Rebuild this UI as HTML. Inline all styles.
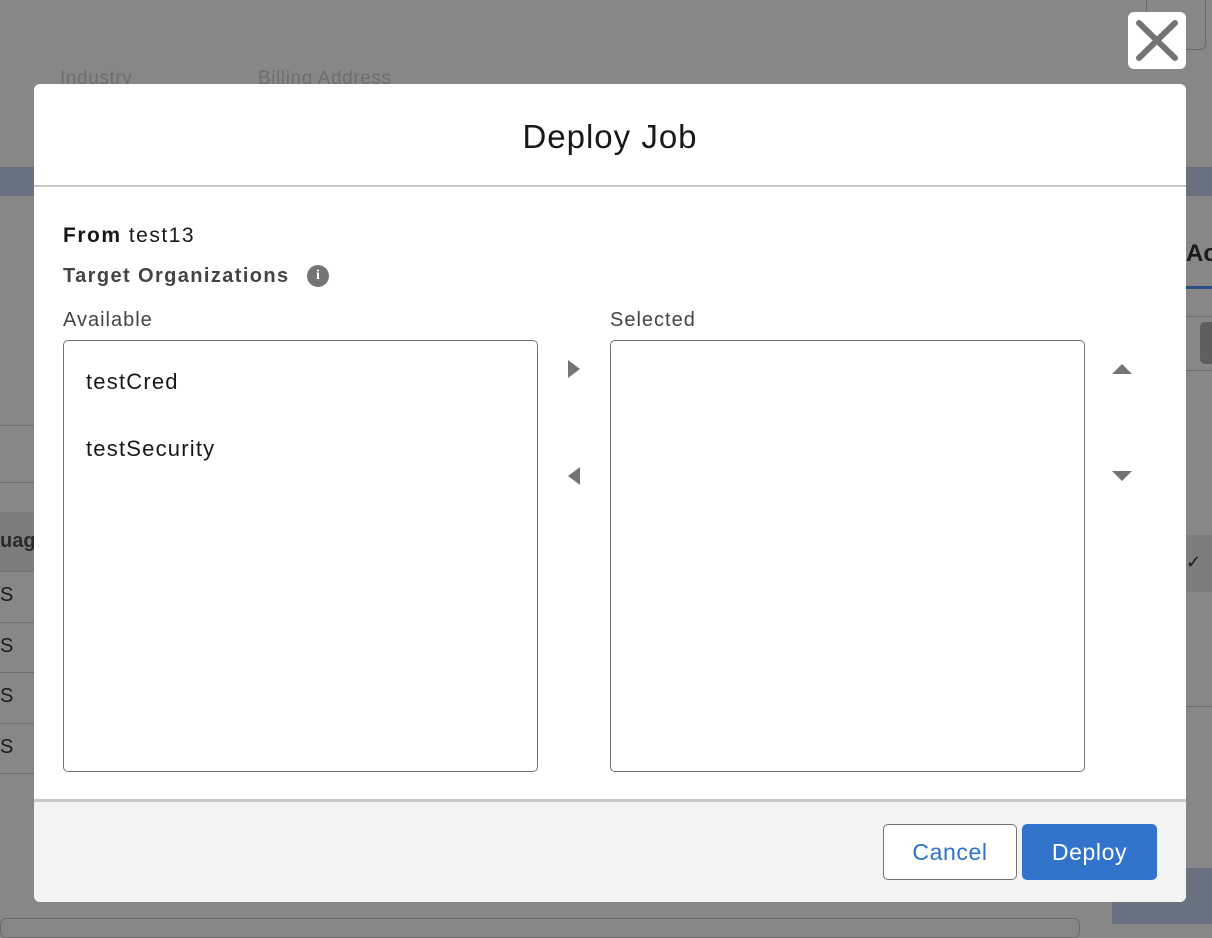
<!DOCTYPE html>
<html><head><meta charset="utf-8"><style>
*{box-sizing:border-box;margin:0;padding:0}
body{width:1212px;height:924px;background:#878787;position:relative;overflow:hidden;font-family:"Liberation Sans",Arial,sans-serif;color:#181818}
.abs{position:absolute}
</style></head><body>
<div class="abs" style="left:1146px;top:0;width:60px;height:50px;border:1px solid #6a6a6a;border-top:none;border-radius:0 0 6px 6px"></div>
<div class="abs" style="left:60px;top:68px;font-size:19px;color:#6e6e6e;letter-spacing:0.6px">Industry</div>
<div class="abs" style="left:258px;top:68px;font-size:19px;color:#6e6e6e;letter-spacing:0.6px">Billing Address</div>
<div class="abs" style="left:0;top:167px;width:1212px;height:29px;background:#68717e"></div>
<div class="abs" style="left:1186px;top:240px;font-size:24px;font-weight:bold;color:#1a1a1a">Ac</div>
<div class="abs" style="left:1186px;top:286px;width:26px;height:3px;background:#2a4f85"></div>
<div class="abs" style="left:1186px;top:316px;width:26px;height:1px;background:#6e6e6e"></div>
<div class="abs" style="left:1200px;top:322px;width:20px;height:42px;background:#5f5f5f;border-radius:5px"></div>
<div class="abs" style="left:1186px;top:370px;width:26px;height:1px;background:#6e6e6e"></div>
<div class="abs" style="left:1186px;top:535px;width:26px;height:57px;background:#7d7d7d"></div>
<div class="abs" style="left:1186px;top:552px;font-size:18px;color:#1a1a1a">&#10003;</div>
<div class="abs" style="left:1186px;top:706px;width:26px;height:1px;background:#6e6e6e"></div>
<div class="abs" style="left:1112px;top:868px;width:100px;height:56px;background:#68717e"></div>
<div class="abs" style="left:0;top:425px;width:34px;height:1px;background:#6e6e6e"></div>
<div class="abs" style="left:0;top:482px;width:34px;height:1px;background:#6e6e6e"></div>
<div class="abs" style="left:0;top:512px;width:34px;height:60px;background:#7d7d7d"></div>
<div class="abs" style="left:0;top:530px;font-size:20px;font-weight:bold;color:#2a2a2a">uag</div>
<div class="abs" style="left:0;top:571px;width:34px;height:1px;background:#6e6e6e"></div>
<div class="abs" style="left:0;top:584px;font-size:20px;color:#1a1a1a">S</div>
<div class="abs" style="left:0;top:622px;width:34px;height:1px;background:#6e6e6e"></div>
<div class="abs" style="left:0;top:635px;font-size:20px;color:#1a1a1a">S</div>
<div class="abs" style="left:0;top:672px;width:34px;height:1px;background:#6e6e6e"></div>
<div class="abs" style="left:0;top:685px;font-size:20px;color:#1a1a1a">S</div>
<div class="abs" style="left:0;top:723px;width:34px;height:1px;background:#6e6e6e"></div>
<div class="abs" style="left:0;top:736px;font-size:20px;color:#1a1a1a">S</div>
<div class="abs" style="left:0;top:773px;width:34px;height:1px;background:#6e6e6e"></div>
<div class="abs" style="left:0;top:918px;width:1080px;height:20px;border:1px solid #6a6a6a;border-radius:6px"></div>

<div class="abs" style="left:1128px;top:12px;width:58px;height:57px;background:#fff;border-radius:6px">
<svg width="58" height="57" viewBox="0 0 58 57"><path d="M11 11L47 46M47 11L11 46" stroke="#747474" stroke-width="6" stroke-linecap="round"/></svg>
</div>

<div class="abs" style="left:34px;top:84px;width:1152px;height:818px;background:#fff;border-radius:6px;overflow:hidden">
  <div class="abs" style="left:0;top:0;width:1152px;height:103px;border-bottom:2px solid #c9c9c9;text-align:center;font-size:33px;line-height:106px;color:#181818;letter-spacing:1px">Deploy Job</div>
  <div class="abs" style="left:29px;top:140px;font-size:21px;letter-spacing:1.5px"><b>From</b> test13</div>
  <div class="abs" style="left:29px;top:181px;font-size:20px;font-weight:bold;color:#444;letter-spacing:1.4px">Target Organizations</div>
  <div class="abs" style="left:273px;top:181px;width:22px;height:22px;border-radius:50%;background:#747474;color:#fff;font-size:14px;font-weight:bold;text-align:center;line-height:22px;font-family:'Liberation Serif',serif">i</div>
  <div class="abs" style="left:29px;top:225px;font-size:20px;color:#444;letter-spacing:1px">Available</div>
  <div class="abs" style="left:576px;top:225px;font-size:20px;color:#444;letter-spacing:1px">Selected</div>
  <div class="abs" style="left:29px;top:256px;width:475px;height:432px;border:1px solid #747474;border-radius:5px">
    <div class="abs" style="left:22px;top:28px;font-size:22px;letter-spacing:1.2px">testCred</div>
    <div class="abs" style="left:22px;top:95px;font-size:22px;letter-spacing:1.2px">testSecurity</div>
  </div>
  <div class="abs" style="left:576px;top:256px;width:475px;height:432px;border:1px solid #747474;border-radius:5px"></div>
  <svg class="abs" style="left:530px;top:274px" width="20" height="22"><path d="M4 2L16 11L4 20Z" fill="#747474"/></svg>
  <svg class="abs" style="left:530px;top:381px" width="20" height="22"><path d="M16 2L4 11L16 20Z" fill="#747474"/></svg>
  <svg class="abs" style="left:1077px;top:278px" width="22" height="14"><path d="M1 12L11 2L21 12Z" fill="#747474"/></svg>
  <svg class="abs" style="left:1077px;top:385px" width="22" height="14"><path d="M1 2L11 12L21 2Z" fill="#747474"/></svg>
  <div class="abs" style="left:0;top:715px;width:1152px;height:103px;background:#f3f3f3;border-top:3px solid #c9c9c9">
    <div class="abs" style="left:849px;top:22px;width:134px;height:56px;background:#fff;border:1px solid #747474;border-radius:5px;color:#2e72c9;font-size:23px;text-align:center;line-height:54px;letter-spacing:0.6px">Cancel</div>
    <div class="abs" style="left:988px;top:22px;width:135px;height:56px;background:#3274cc;border-radius:5px;color:#fff;font-size:23px;text-align:center;line-height:56px;letter-spacing:0.6px">Deploy</div>
  </div>
</div>
</body></html>
